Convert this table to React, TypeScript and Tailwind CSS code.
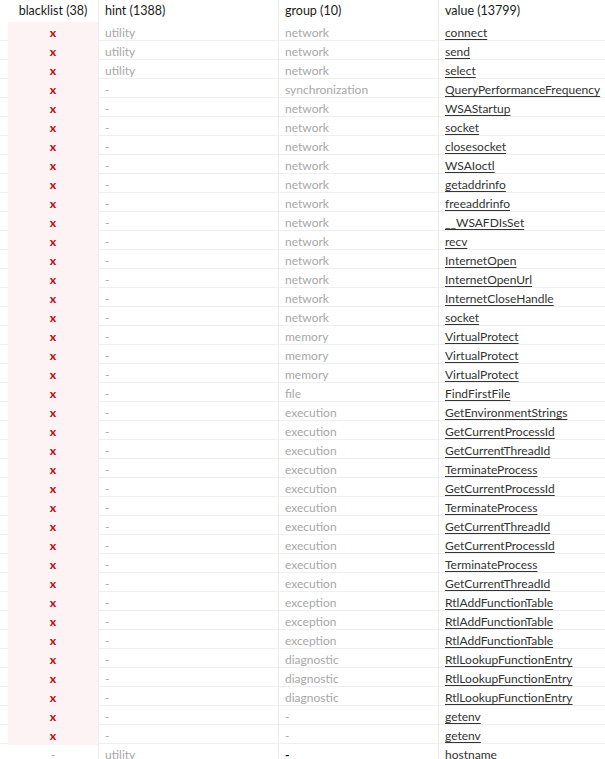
const rows: [string, string, string][] = [
  ["utility", "network", "connect"],
  ["utility", "network", "send"],
  ["utility", "network", "select"],
  ["-", "synchronization", "QueryPerformanceFrequency"],
  ["-", "network", "WSAStartup"],
  ["-", "network", "socket"],
  ["-", "network", "closesocket"],
  ["-", "network", "WSAIoctl"],
  ["-", "network", "getaddrinfo"],
  ["-", "network", "freeaddrinfo"],
  ["-", "network", "__WSAFDIsSet"],
  ["-", "network", "recv"],
  ["-", "network", "InternetOpen"],
  ["-", "network", "InternetOpenUrl"],
  ["-", "network", "InternetCloseHandle"],
  ["-", "network", "socket"],
  ["-", "memory", "VirtualProtect"],
  ["-", "memory", "VirtualProtect"],
  ["-", "memory", "VirtualProtect"],
  ["-", "file", "FindFirstFile"],
  ["-", "execution", "GetEnvironmentStrings"],
  ["-", "execution", "GetCurrentProcessId"],
  ["-", "execution", "GetCurrentThreadId"],
  ["-", "execution", "TerminateProcess"],
  ["-", "execution", "GetCurrentProcessId"],
  ["-", "execution", "TerminateProcess"],
  ["-", "execution", "GetCurrentThreadId"],
  ["-", "execution", "GetCurrentProcessId"],
  ["-", "execution", "TerminateProcess"],
  ["-", "execution", "GetCurrentThreadId"],
  ["-", "exception", "RtlAddFunctionTable"],
  ["-", "exception", "RtlAddFunctionTable"],
  ["-", "exception", "RtlAddFunctionTable"],
  ["-", "diagnostic", "RtlLookupFunctionEntry"],
  ["-", "diagnostic", "RtlLookupFunctionEntry"],
  ["-", "diagnostic", "RtlLookupFunctionEntry"],
  ["-", "-", "getenv"],
  ["-", "-", "getenv"],
];

const cols = "grid grid-cols-[8px_90px_180px_160px_1fr]";

const App = () => {
  return (
    <div className="min-h-screen bg-white text-[12px] font-['Lato',sans-serif] overflow-hidden">
      <div className={`${cols} h-[22px] text-[#1a1a1a] text-[12.5px]`}>
        <div />
        <div className="flex items-center justify-center pt-[1px]">blacklist (38)</div>
        <div className="flex items-center pl-[6px] pt-[1px] border-l border-[#ececec]">hint (1388)</div>
        <div className="flex items-center pl-[6px] pt-[1px] border-l border-[#ececec]">group (10)</div>
        <div className="flex items-center pl-[6px] pt-[1px] border-l border-[#ececec]">value (13799)</div>
      </div>

      {rows.map(([hint, group, value], i) => (
        <div key={i} className={`${cols} h-[19px] border-b border-[#efefef]`}>
          <div />
          <div className="bg-[#fdf2f4] flex items-center justify-center pt-[2px] text-[#b8141a] font-black text-[12px]">x</div>
          <div className="flex items-center pl-[6px] pt-[2px] border-l border-[#ececec] text-[#a8a8a8]">{hint}</div>
          <div className="flex items-center pl-[6px] pt-[2px] border-l border-[#ececec] text-[#a8a8a8]">{group}</div>
          <div className="flex items-center pl-[6px] pt-[2px] border-l border-[#ececec] text-[#333] underline underline-offset-2 whitespace-nowrap">{value}</div>
        </div>
      ))}

      <div className={`${cols} h-[19px] border-b border-[#efefef]`}>
        <div />
        <div className="flex items-center justify-center pt-[2px] text-[#a8a8a8]">-</div>
        <div className="flex items-center pl-[6px] pt-[2px] border-l border-[#ececec] text-[#a8a8a8]">utility</div>
        <div className="flex items-center pl-[6px] pt-[2px] border-l border-[#ececec] text-black font-bold">-</div>
        <div className="flex items-center pl-[6px] pt-[2px] border-l border-[#ececec] text-[#333]">hostname</div>
      </div>
    </div>
  );
};

export default App;
